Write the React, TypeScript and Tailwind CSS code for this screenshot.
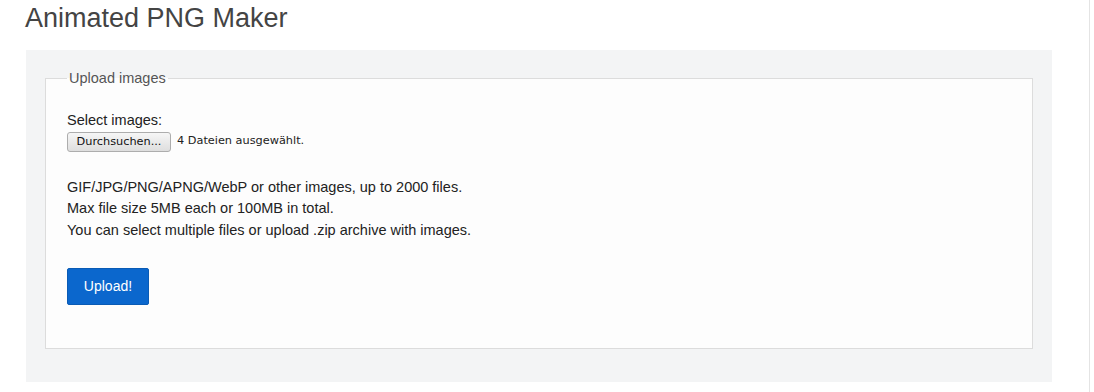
export default function App() {
  return (
    <div className="min-h-[392px] bg-white font-['Liberation_Sans',Arial,sans-serif]">
      <div className="min-h-[392px] w-[1090px] border-r border-[#e4e4e4] pl-[25px] pr-[37px]">
        <h1 className="pt-[3px] text-[27px] leading-[31px] text-[#444]">Animated PNG Maker</h1>

        <div className="mt-[16px] ml-px bg-[#f3f4f5] px-[19px] pt-[20px] pb-[33px]">
          <fieldset className="border border-[#dcdcdc] bg-[#fdfdfd] px-[21px] pt-[23px] pb-[43px]">
            <legend className="px-[2px] text-[14.5px] leading-[17px] text-[#555]">
              Upload images
            </legend>

            <div className="text-[14.5px] leading-[21.5px] text-[#222]">Select images:</div>
            <div className="flex items-center gap-[6px]">
              <button
                type="button"
                className="h-[20px] w-[104px] rounded-[3px] border border-[#adadad] bg-gradient-to-b from-[#f6f6f6] to-[#dedede] font-['DejaVu_Sans',sans-serif] text-[11.3px] leading-[18px] text-[#111]"
              >
                Durchsuchen...
              </button>
              <span className="font-['DejaVu_Sans',sans-serif] text-[11.3px] text-[#222]">4 Dateien ausgewählt.</span>
            </div>

            <div className="mt-[25px] text-[14.5px] leading-[21.5px] text-[#222]">
              <p>GIF/JPG/PNG/APNG/WebP or other images, up to 2000 files.</p>
              <p>Max file size 5MB each or 100MB in total.</p>
              <p>You can select multiple files or upload .zip archive with images.</p>
            </div>

            <button
              type="button"
              className="mt-[27px] h-[37px] w-[82px] rounded-[2px] border border-[#0a5bb5] bg-[#0b67cd] text-[14px] text-white"
            >
              Upload!
            </button>
          </fieldset>
        </div>
      </div>
    </div>
  );
}
